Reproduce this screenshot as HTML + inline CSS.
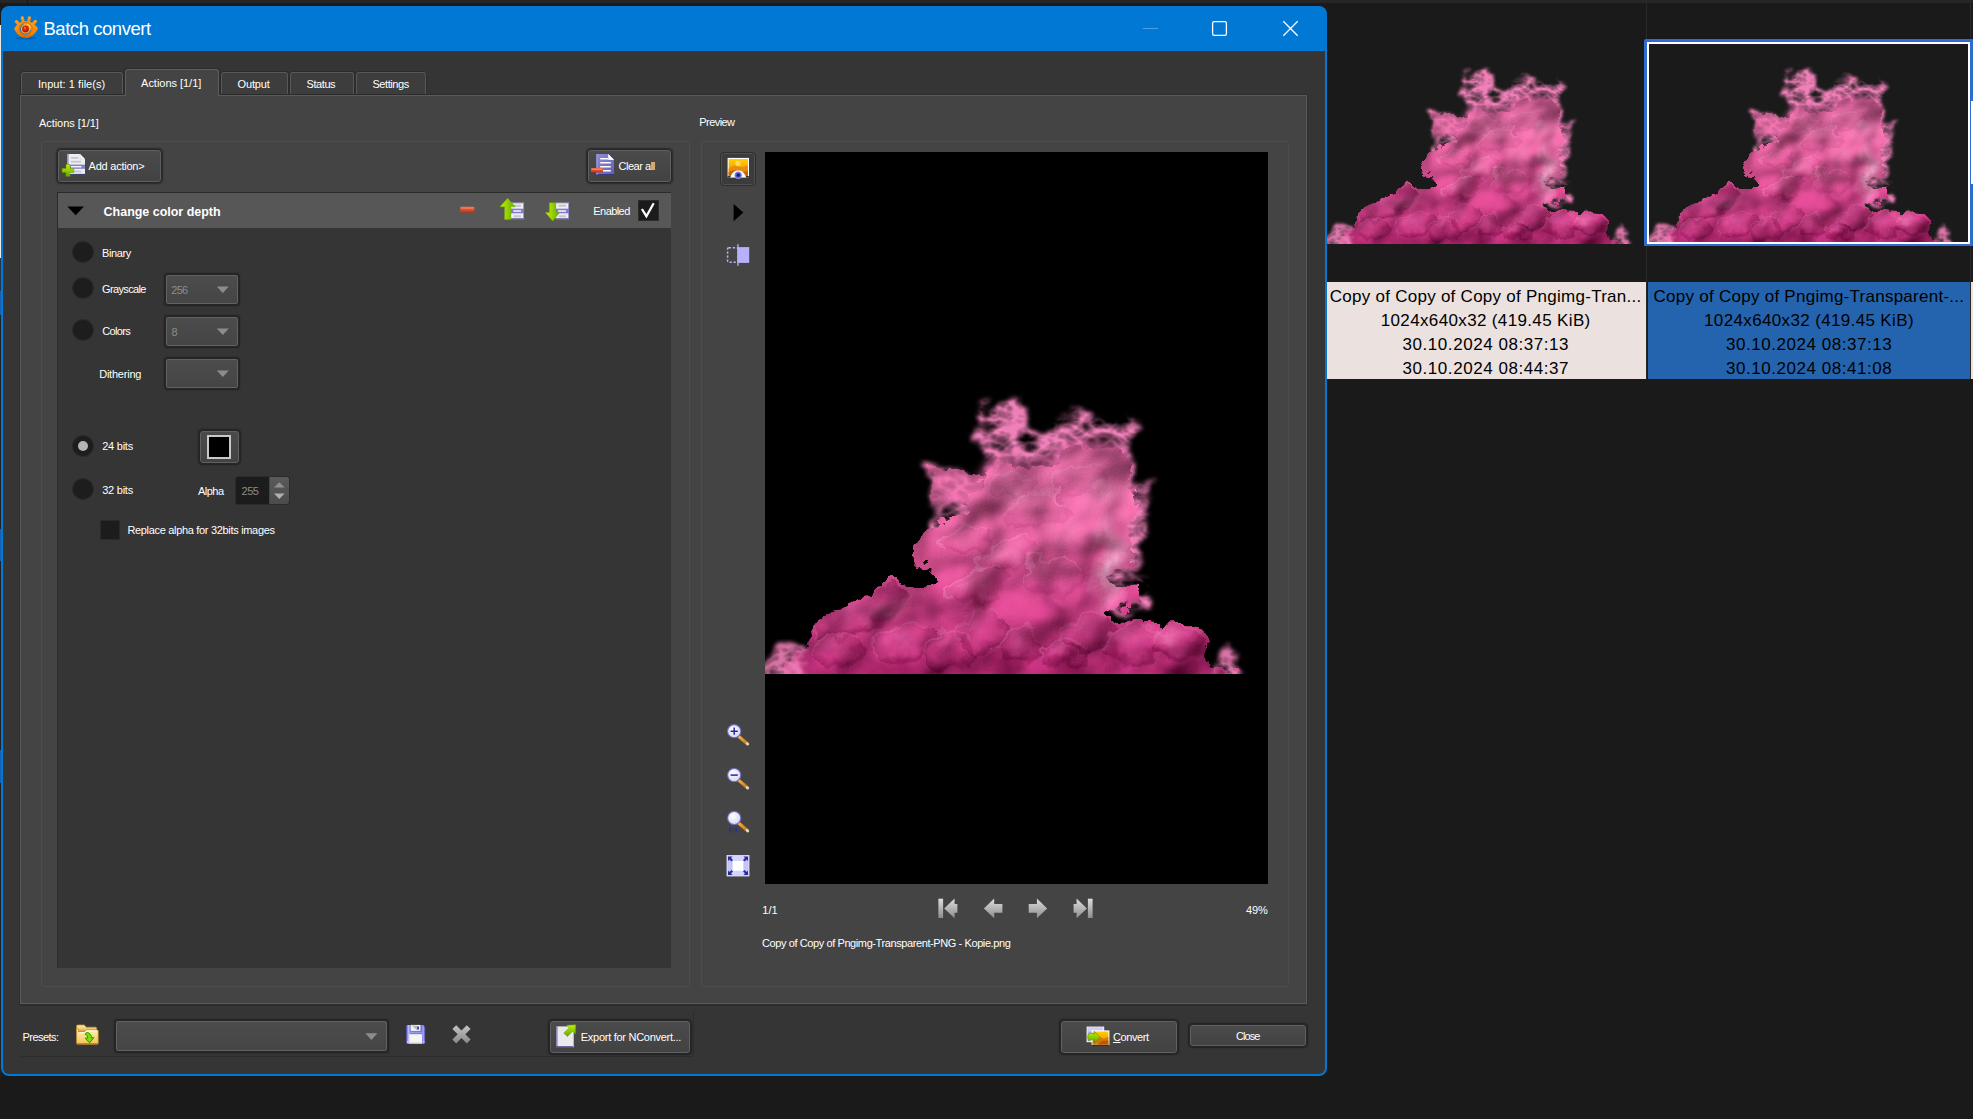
<!DOCTYPE html><html><head><meta charset="utf-8"><title>Batch convert</title><style>
*{box-sizing:border-box;margin:0;padding:0}
html,body{width:1973px;height:1119px;overflow:hidden;background:#1a1a1a;font-family:"Liberation Sans",sans-serif;}
.a,.t,.i{position:absolute}
.t{white-space:pre;font-size:11px;color:#fff}
.i{overflow:visible}
.btn{position:absolute;border:1px solid #262626;border-radius:4px;background:linear-gradient(#4b4b4b,#424242);box-shadow:inset 0 0 0 1px #606060,0 0 1.5px .5px rgba(0,0,0,.4)}
.combo{position:absolute;border:1px solid #262626;border-radius:3px;background:linear-gradient(#4c4c4c,#454545);box-shadow:inset 0 0 0 1px #626262,0 0 1.5px .5px rgba(0,0,0,.4)}
.radio{position:absolute;width:20px;height:20px;border-radius:50%;background:#1d1d1d;box-shadow:0 0 0 1px #2a2a2a}
.grp{position:absolute;border:1px solid #4d4d4d;border-radius:3px}
.tab{position:absolute;background:#3d3d3d;border:1px solid #585858;border-bottom:none;border-radius:3px 3px 0 0;box-shadow:0 0 0 1px #2c2c2c}
</style></head><body>

<svg width="0" height="0" style="position:absolute">
<defs>
<linearGradient id="gGreen" x1="0" y1="0" x2="0" y2="1"><stop offset="0" stop-color="#c4f000"/><stop offset="1" stop-color="#5fa800"/></linearGradient>
<linearGradient id="gGreenH" x1="0" y1="0" x2="1" y2="0"><stop offset="0" stop-color="#c8f400"/><stop offset="1" stop-color="#62aa00"/></linearGradient>
<linearGradient id="gRed" x1="0" y1="0" x2="0" y2="1"><stop offset="0" stop-color="#f4704c"/><stop offset="1" stop-color="#b83414"/></linearGradient>
<linearGradient id="gGrey" x1="0" y1="0" x2="0" y2="1"><stop offset="0" stop-color="#dedede"/><stop offset="1" stop-color="#8c8c8c"/></linearGradient>
<linearGradient id="gPurp" x1="0" y1="0" x2="1" y2="1"><stop offset="0" stop-color="#8f8cd6"/><stop offset="1" stop-color="#6460b2"/></linearGradient>
<linearGradient id="gSun" x1="0" y1="0" x2="0" y2="1"><stop offset="0" stop-color="#ffd000"/><stop offset="0.5" stop-color="#f8a800"/><stop offset="1" stop-color="#d86c00"/></linearGradient>
<linearGradient id="gFold" x1="0" y1="0" x2="0" y2="1"><stop offset="0" stop-color="#fff4b8"/><stop offset="1" stop-color="#f2c058"/></linearGradient>
<linearGradient id="gFoldB" x1="0" y1="0" x2="0" y2="1"><stop offset="0" stop-color="#fff0b0"/><stop offset="1" stop-color="#e8b048"/></linearGradient>
<linearGradient id="gFlop" x1="0" y1="0" x2="1" y2="0"><stop offset="0" stop-color="#5454c4"/><stop offset="0.12" stop-color="#b8b8f8"/><stop offset="0.25" stop-color="#7878e0"/><stop offset="0.8" stop-color="#7474dc"/><stop offset="0.9" stop-color="#a8a8f0"/><stop offset="1" stop-color="#4444b0"/></linearGradient>
<radialGradient id="gLens" cx="0.4" cy="0.35" r="0.7"><stop offset="0" stop-color="#ffffff"/><stop offset="1" stop-color="#d4d4f0"/></radialGradient>
<linearGradient id="gHandle" x1="0" y1="0" x2="1" y2="1"><stop offset="0" stop-color="#f0b050"/><stop offset="1" stop-color="#c07818"/></linearGradient>
<radialGradient id="gPupil" cx="0.45" cy="0.4" r="0.6"><stop offset="0" stop-color="#f04020"/><stop offset="1" stop-color="#b00c00"/></radialGradient>
<linearGradient id="gOr" x1="0" y1="0" x2="0" y2="1"><stop offset="0" stop-color="#ffa018"/><stop offset="1" stop-color="#f07800"/></linearGradient>
<radialGradient id="gIris" cx="0.5" cy="0.5" r="0.5"><stop offset="0" stop-color="#202080"/><stop offset="0.35" stop-color="#3838b0"/><stop offset="1" stop-color="#9898f0"/></radialGradient>
</defs></svg>

<svg width="0" height="0" style="position:absolute"><defs>

<linearGradient id="sBase" x1="0" y1="0" x2="0" y2="1">
 <stop offset="0.2" stop-color="#f070ac"/><stop offset="0.42" stop-color="#e65a9c"/><stop offset="0.62" stop-color="#da4890"/><stop offset="0.78" stop-color="#d23c88"/><stop offset="0.9" stop-color="#c6307e"/><stop offset="1" stop-color="#b42470"/>
</linearGradient>
<radialGradient id="sPuff" cx="0.4" cy="0.3" r="0.66">
 <stop offset="0" stop-color="#f888bc" stop-opacity=".7"/><stop offset="0.6" stop-color="#e860a0" stop-opacity=".35"/><stop offset="0.86" stop-color="#a01c60" stop-opacity=".4"/><stop offset="1" stop-color="#801048" stop-opacity="0"/>
</radialGradient>
<radialGradient id="sPuffD" cx="0.38" cy="0.28" r="0.7">
 <stop offset="0" stop-color="#e058a0" stop-opacity=".85"/><stop offset="0.55" stop-color="#c83880" stop-opacity=".55"/><stop offset="0.85" stop-color="#800c48" stop-opacity=".6"/><stop offset="1" stop-color="#600034" stop-opacity="0"/>
</radialGradient>
<radialGradient id="sHi" cx="0.5" cy="0.5" r="0.5">
 <stop offset="0" stop-color="#ffc4e0" stop-opacity=".9"/><stop offset="1" stop-color="#ff8cc0" stop-opacity="0"/>
</radialGradient>
<radialGradient id="sDk" cx="0.5" cy="0.5" r="0.5">
 <stop offset="0" stop-color="#6a0034" stop-opacity=".8"/><stop offset="1" stop-color="#6a0034" stop-opacity="0"/>
</radialGradient>
<filter id="sEdge" x="-10%" y="-10%" width="120%" height="120%" color-interpolation-filters="sRGB">
 <feTurbulence type="fractalNoise" baseFrequency="0.045" numOctaves="4" seed="11" result="n"/>
 <feDisplacementMap in="SourceGraphic" in2="n" scale="26" xChannelSelector="R" yChannelSelector="G" result="d0"/>
 <feOffset in="d0" dx="2.5" dy="2.5" result="d"/>
 <feTurbulence type="fractalNoise" baseFrequency="0.016 0.02" numOctaves="4" seed="31" result="n2a"/>
 <feGaussianBlur in="n2a" stdDeviation="5" result="n2"/>
 <feDiffuseLighting in="n2" surfaceScale="17" diffuseConstant="1.0" lighting-color="#ffffff" result="l"><feDistantLight azimuth="225" elevation="50"/></feDiffuseLighting>
 <feComposite in="d" in2="l" operator="arithmetic" k1="0.66" k2="0.40" k3="0.12" k4="-0.09" result="m"/>
 <feComposite in="m" in2="d" operator="in" result="mm"/>
 <feGaussianBlur in="mm" stdDeviation="0.5"/>
</filter>
<filter id="sFil" x="-10%" y="-10%" width="120%" height="120%" color-interpolation-filters="sRGB">
 <feTurbulence type="turbulence" baseFrequency="0.03 0.042" numOctaves="3" seed="8" result="t"/>
 <feColorMatrix in="t" type="matrix" values="0 0 0 0 0.94  0 0 0 0 0.50  0 0 0 0 0.72  -1.9 0 0 0 1.2" result="a"/>
 <feTurbulence type="fractalNoise" baseFrequency="0.045" numOctaves="4" seed="11" result="n"/>
 <feDisplacementMap in="SourceGraphic" in2="n" scale="26" xChannelSelector="R" yChannelSelector="G" result="d0"/>
 <feOffset in="d0" dx="2.5" dy="2.5" result="d"/>
 <feGaussianBlur in="d" stdDeviation="2.2" result="db"/>
 <feComposite in="a" in2="db" operator="in" result="w"/>
 <feGaussianBlur in="w" stdDeviation="0.4"/>
</filter>
<filter id="sSoft" x="-10%" y="-10%" width="120%" height="120%"><feOffset dx="1" dy="-3"/><feGaussianBlur stdDeviation="5"/></filter>
<filter id="sWisp" x="-20%" y="-20%" width="140%" height="140%" color-interpolation-filters="sRGB">
 <feTurbulence type="fractalNoise" baseFrequency="0.06" numOctaves="3" seed="3" result="n"/>
 <feDisplacementMap in="SourceGraphic" in2="n" scale="18" xChannelSelector="G" yChannelSelector="R" result="d"/>
 <feGaussianBlur in="d" stdDeviation="0.45"/>
</filter>
<filter id="sTex" x="0" y="0" width="100%" height="100%" color-interpolation-filters="sRGB">
 <feTurbulence type="fractalNoise" baseFrequency="0.028 0.034" numOctaves="4" seed="23" result="n"/>
 <feDiffuseLighting in="n" surfaceScale="7" diffuseConstant="1.15" lighting-color="#ffffff" result="l"><feDistantLight azimuth="235" elevation="52"/></feDiffuseLighting>
 <feComposite in="l" in2="SourceAlpha" operator="in"/>
</filter>
<clipPath id="sSil"><path d="M45.0 318.0 C-22.7 310.3 43.2 281.7 44.0 272.0 C44.8 262.3 46.7 263.5 50.0 260.0 C53.3 256.5 58.3 254.7 64.0 251.0 C69.7 247.3 76.0 242.7 84.0 238.0 C92.0 233.3 103.5 225.8 112.0 223.0 C120.5 220.2 127.8 220.5 135.0 221.0 C142.2 221.5 150.0 226.8 155.0 226.0 C160.0 225.2 164.5 219.3 165.0 216.0 C165.5 212.7 160.7 210.2 158.0 206.0 C155.3 201.8 150.8 195.3 149.0 191.0 C147.2 186.7 145.5 184.2 147.0 180.0 C148.5 175.8 152.8 170.2 158.0 166.0 C163.2 161.8 171.3 157.5 178.0 155.0 C184.7 152.5 195.0 153.5 198.0 151.0 C201.0 148.5 194.8 143.8 196.0 140.0 C197.2 136.2 201.8 132.2 205.0 128.0 C208.2 123.8 212.2 118.8 215.0 115.0 C217.8 111.2 217.8 107.5 222.0 105.0 C226.2 102.5 233.3 100.2 240.0 100.0 C246.7 99.8 254.5 104.3 262.0 104.0 C269.5 103.7 278.7 101.0 285.0 98.0 C291.3 95.0 294.2 88.7 300.0 86.0 C305.8 83.3 312.5 82.0 320.0 82.0 C327.5 82.0 338.3 83.8 345.0 86.0 C351.7 88.2 356.8 91.0 360.0 95.0 C363.2 99.0 363.7 106.2 364.0 110.0 C364.3 113.8 360.7 114.7 362.0 118.0 C363.3 121.3 371.0 124.8 372.0 130.0 C373.0 135.2 369.2 142.7 368.0 149.0 C366.8 155.3 366.5 161.2 365.0 168.0 C363.5 174.8 358.8 184.7 359.0 190.0 C359.2 195.3 367.0 196.8 366.0 200.0 C365.0 203.2 356.8 205.2 353.0 209.0 C349.2 212.8 339.8 219.8 343.0 223.0 C346.2 226.2 367.5 224.5 372.0 228.0 C376.5 231.5 373.8 241.2 370.0 244.0 C366.2 246.8 354.3 243.7 349.0 245.0 C343.7 246.3 333.0 249.3 338.0 252.0 C343.0 254.7 364.0 259.3 379.0 261.0 C394.0 262.7 418.2 259.3 428.0 262.0 C437.8 264.7 436.8 271.2 438.0 277.0 C439.2 282.8 433.0 290.2 435.0 297.0 C437.0 303.8 515.0 314.5 450.0 318.0 C385.0 321.5 112.7 325.7 45.0 318.0 Z"/></clipPath>
<clipPath id="sClip"><rect x="0" y="0" width="503" height="314"/></clipPath>

<symbol id="smoke" viewBox="0 0 503 314" preserveAspectRatio="none"><g clip-path="url(#sClip)">
<g filter="url(#sFil)"><path d="M150.0 170.0 C141.2 171.7 145.7 180.7 147.0 180.0 C148.3 179.3 154.2 171.0 158.0 166.0 C161.8 161.0 169.7 154.3 170.0 150.0 C170.3 145.7 160.7 142.0 160.0 140.0 C159.3 138.0 165.5 141.3 166.0 138.0 C166.5 134.7 164.3 126.2 163.0 120.0 C161.7 113.8 153.8 102.7 158.0 101.0 C162.2 99.3 178.8 108.0 188.0 110.0 C197.2 112.0 208.7 115.8 213.0 113.0 C217.3 110.2 214.5 100.8 214.0 93.0 C213.5 85.2 210.3 74.8 210.0 66.0 C209.7 57.2 210.0 42.3 212.0 40.0 C214.0 37.7 218.7 52.3 222.0 52.0 C225.3 51.7 228.3 41.2 232.0 38.0 C235.7 34.8 239.8 31.8 244.0 33.0 C248.2 34.2 254.0 39.5 257.0 45.0 C260.0 50.5 258.3 62.5 262.0 66.0 C265.7 69.5 272.3 69.2 279.0 66.0 C285.7 62.8 295.7 50.7 302.0 47.0 C308.3 43.3 311.0 43.2 317.0 44.0 C323.0 44.8 329.5 49.7 338.0 52.0 C346.5 54.3 363.7 53.3 368.0 58.0 C372.3 62.7 364.0 72.3 364.0 80.0 C364.0 87.7 367.7 97.7 368.0 104.0 C368.3 110.3 364.0 114.5 366.0 118.0 C368.0 121.5 378.3 119.8 380.0 125.0 C381.7 130.2 376.0 142.3 376.0 149.0 C376.0 155.7 381.3 158.2 380.0 165.0 C378.7 171.8 369.0 184.2 368.0 190.0 C367.0 195.8 375.3 196.3 374.0 200.0 C372.7 203.7 358.3 208.3 360.0 212.0 C361.7 215.7 380.7 216.3 384.0 222.0 C387.3 227.7 385.7 241.7 380.0 246.0 C374.3 250.3 363.3 255.7 350.0 248.0 C336.7 240.3 316.7 214.7 300.0 200.0 C283.3 185.3 266.7 165.0 250.0 160.0 C233.3 155.0 216.7 168.3 200.0 170.0 C183.3 171.7 158.8 168.3 150.0 170.0 Z" fill="#fff"/></g>
<g filter="url(#sSoft)" opacity=".6"><path d="M200.0 170.0 C191.3 164.3 198.7 156.0 198.0 151.0 C197.3 146.0 194.8 143.8 196.0 140.0 C197.2 136.2 201.8 132.2 205.0 128.0 C208.2 123.8 212.2 118.8 215.0 115.0 C217.8 111.2 217.8 107.5 222.0 105.0 C226.2 102.5 233.3 100.2 240.0 100.0 C246.7 99.8 254.5 104.3 262.0 104.0 C269.5 103.7 278.7 101.0 285.0 98.0 C291.3 95.0 294.2 88.7 300.0 86.0 C305.8 83.3 312.5 82.0 320.0 82.0 C327.5 82.0 338.3 83.8 345.0 86.0 C351.7 88.2 356.8 91.0 360.0 95.0 C363.2 99.0 363.7 106.2 364.0 110.0 C364.3 113.8 361.7 113.8 362.0 118.0 C362.3 122.2 366.3 126.3 366.0 135.0 C365.7 143.7 371.0 161.7 360.0 170.0 C349.0 178.3 318.3 182.5 300.0 185.0 C281.7 187.5 266.7 187.5 250.0 185.0 C233.3 182.5 208.7 175.7 200.0 170.0 Z" fill="#e465a4"/></g>
<g filter="url(#sEdge)" opacity=".62"><path d="M162.0 104.0 C165.8 102.0 179.3 108.7 188.0 110.0 C196.7 111.3 208.3 109.5 214.0 112.0 C219.7 114.5 222.7 120.3 222.0 125.0 C221.3 129.7 215.0 136.5 210.0 140.0 C205.0 143.5 199.0 146.0 192.0 146.0 C185.0 146.0 172.5 144.0 168.0 140.0 C163.5 136.0 166.0 128.0 165.0 122.0 C164.0 116.0 158.2 106.0 162.0 104.0 Z" fill="#ee6aa8"/></g>
<g filter="url(#sEdge)"><g clip-path="url(#sSil)"><path d="M45.0 318.0 C-22.7 310.3 43.2 281.7 44.0 272.0 C44.8 262.3 46.7 263.5 50.0 260.0 C53.3 256.5 58.3 254.7 64.0 251.0 C69.7 247.3 76.0 242.7 84.0 238.0 C92.0 233.3 103.5 225.8 112.0 223.0 C120.5 220.2 127.8 220.5 135.0 221.0 C142.2 221.5 150.0 226.8 155.0 226.0 C160.0 225.2 164.5 219.3 165.0 216.0 C165.5 212.7 160.7 210.2 158.0 206.0 C155.3 201.8 150.8 195.3 149.0 191.0 C147.2 186.7 145.5 184.2 147.0 180.0 C148.5 175.8 152.8 170.2 158.0 166.0 C163.2 161.8 171.3 157.5 178.0 155.0 C184.7 152.5 195.0 153.5 198.0 151.0 C201.0 148.5 194.8 143.8 196.0 140.0 C197.2 136.2 201.8 132.2 205.0 128.0 C208.2 123.8 212.2 118.8 215.0 115.0 C217.8 111.2 217.8 107.5 222.0 105.0 C226.2 102.5 233.3 100.2 240.0 100.0 C246.7 99.8 254.5 104.3 262.0 104.0 C269.5 103.7 278.7 101.0 285.0 98.0 C291.3 95.0 294.2 88.7 300.0 86.0 C305.8 83.3 312.5 82.0 320.0 82.0 C327.5 82.0 338.3 83.8 345.0 86.0 C351.7 88.2 356.8 91.0 360.0 95.0 C363.2 99.0 363.7 106.2 364.0 110.0 C364.3 113.8 360.7 114.7 362.0 118.0 C363.3 121.3 371.0 124.8 372.0 130.0 C373.0 135.2 369.2 142.7 368.0 149.0 C366.8 155.3 366.5 161.2 365.0 168.0 C363.5 174.8 358.8 184.7 359.0 190.0 C359.2 195.3 367.0 196.8 366.0 200.0 C365.0 203.2 356.8 205.2 353.0 209.0 C349.2 212.8 339.8 219.8 343.0 223.0 C346.2 226.2 367.5 224.5 372.0 228.0 C376.5 231.5 373.8 241.2 370.0 244.0 C366.2 246.8 354.3 243.7 349.0 245.0 C343.7 246.3 333.0 249.3 338.0 252.0 C343.0 254.7 364.0 259.3 379.0 261.0 C394.0 262.7 418.2 259.3 428.0 262.0 C437.8 264.7 436.8 271.2 438.0 277.0 C439.2 282.8 433.0 290.2 435.0 297.0 C437.0 303.8 515.0 314.5 450.0 318.0 C385.0 321.5 112.7 325.7 45.0 318.0 Z" fill="url(#sBase)"/><ellipse cx="93" cy="250" rx="48" ry="24" fill="url(#sPuffD)" opacity="0.9" transform="rotate(-20 93 250)"/><ellipse cx="137" cy="282" rx="34" ry="20" fill="url(#sPuffD)" opacity="0.9" transform="rotate(-10 137 282)"/><ellipse cx="182" cy="288" rx="26" ry="22" fill="url(#sPuffD)" opacity="0.9" transform="rotate(10 182 288)"/><ellipse cx="216" cy="268" rx="28" ry="22" fill="url(#sPuffD)" opacity="0.85" transform="rotate(-15 216 268)"/><ellipse cx="253" cy="284" rx="28" ry="20" fill="url(#sPuffD)" opacity="0.9" transform="rotate(5 253 284)"/><ellipse cx="296" cy="290" rx="24" ry="18" fill="url(#sPuffD)" opacity="0.9" transform="rotate(0 296 290)"/><ellipse cx="322" cy="270" rx="28" ry="18" fill="url(#sPuffD)" opacity="0.8" transform="rotate(-10 322 270)"/><ellipse cx="366" cy="282" rx="32" ry="20" fill="url(#sPuffD)" opacity="0.9" transform="rotate(0 366 282)"/><ellipse cx="408" cy="280" rx="28" ry="20" fill="url(#sPuffD)" opacity="0.9" transform="rotate(10 408 280)"/><ellipse cx="208" cy="226" rx="30" ry="20" fill="url(#sPuff)" opacity="0.7" transform="rotate(-10 208 226)"/><ellipse cx="242" cy="194" rx="30" ry="18" fill="url(#sPuff)" opacity="0.7" transform="rotate(-20 242 194)"/><ellipse cx="285" cy="215" rx="32" ry="22" fill="url(#sPuff)" opacity="0.6" transform="rotate(10 285 215)"/><ellipse cx="200" cy="178" rx="28" ry="16" fill="url(#sPuff)" opacity="0.6" transform="rotate(-10 200 178)"/><ellipse cx="270" cy="150" rx="34" ry="20" fill="url(#sPuff)" opacity="0.5" transform="rotate(0 270 150)"/><ellipse cx="310" cy="118" rx="30" ry="18" fill="url(#sPuff)" opacity="0.5" transform="rotate(-10 310 118)"/><ellipse cx="245" cy="122" rx="26" ry="14" fill="url(#sPuff)" opacity="0.5" transform="rotate(0 245 122)"/><ellipse cx="70" cy="290" rx="26" ry="18" fill="url(#sPuffD)" opacity="0.8" transform="rotate(0 70 290)"/><path d="M46.9 256.0 A48 24 0 0 1 129.0 235.1" fill="none" stroke="#f37db6" stroke-width="3" stroke-linecap="round" opacity=".3" transform="rotate(-20 93 250)"/><path d="M104.4 287.0 A34 20 0 0 1 162.5 269.6" fill="none" stroke="#f37db6" stroke-width="3" stroke-linecap="round" opacity=".3" transform="rotate(-10 137 282)"/><path d="M157.0 293.5 A26 22 0 0 1 201.5 274.4" fill="none" stroke="#f37db6" stroke-width="3" stroke-linecap="round" opacity=".3" transform="rotate(10 182 288)"/><path d="M189.1 273.5 A28 22 0 0 1 237.0 254.4" fill="none" stroke="#f37db6" stroke-width="3" stroke-linecap="round" opacity=".3" transform="rotate(-15 216 268)"/><path d="M226.1 289.0 A28 20 0 0 1 274.0 271.6" fill="none" stroke="#f37db6" stroke-width="3" stroke-linecap="round" opacity=".3" transform="rotate(5 253 284)"/><path d="M273.0 294.5 A24 18 0 0 1 314.0 278.8" fill="none" stroke="#f37db6" stroke-width="3" stroke-linecap="round" opacity=".3" transform="rotate(0 296 290)"/><path d="M295.1 274.5 A28 18 0 0 1 343.0 258.8" fill="none" stroke="#f37db6" stroke-width="3" stroke-linecap="round" opacity=".3" transform="rotate(-10 322 270)"/><path d="M335.3 287.0 A32 20 0 0 1 390.0 269.6" fill="none" stroke="#f37db6" stroke-width="3" stroke-linecap="round" opacity=".3" transform="rotate(0 366 282)"/><path d="M381.1 285.0 A28 20 0 0 1 429.0 267.6" fill="none" stroke="#f37db6" stroke-width="3" stroke-linecap="round" opacity=".3" transform="rotate(10 408 280)"/><path d="M179.2 231.0 A30 20 0 0 1 230.5 213.6" fill="none" stroke="#fba6cf" stroke-width="3" stroke-linecap="round" opacity=".3" transform="rotate(-10 208 226)"/><path d="M213.2 198.5 A30 18 0 0 1 264.5 182.8" fill="none" stroke="#fba6cf" stroke-width="3" stroke-linecap="round" opacity=".3" transform="rotate(-20 242 194)"/><path d="M254.3 220.5 A32 22 0 0 1 309.0 201.4" fill="none" stroke="#fba6cf" stroke-width="3" stroke-linecap="round" opacity=".3" transform="rotate(10 285 215)"/><path d="M173.1 182.0 A28 16 0 0 1 221.0 168.1" fill="none" stroke="#fba6cf" stroke-width="3" stroke-linecap="round" opacity=".3" transform="rotate(-10 200 178)"/><path d="M237.4 155.0 A34 20 0 0 1 295.5 137.6" fill="none" stroke="#fba6cf" stroke-width="3" stroke-linecap="round" opacity=".3" transform="rotate(0 270 150)"/><path d="M281.2 122.5 A30 18 0 0 1 332.5 106.8" fill="none" stroke="#fba6cf" stroke-width="3" stroke-linecap="round" opacity=".3" transform="rotate(-10 310 118)"/><path d="M220.0 125.5 A26 14 0 0 1 264.5 113.3" fill="none" stroke="#fba6cf" stroke-width="3" stroke-linecap="round" opacity=".3" transform="rotate(0 245 122)"/><path d="M45.0 294.5 A26 18 0 0 1 89.5 278.8" fill="none" stroke="#f37db6" stroke-width="3" stroke-linecap="round" opacity=".3" transform="rotate(0 70 290)"/><ellipse cx="344" cy="205" rx="22" ry="62" fill="url(#sHi)" opacity="1.0" transform="rotate(8 344 205)"/><ellipse cx="338" cy="170" rx="16" ry="30" fill="url(#sHi)" opacity="0.5" transform="rotate(0 338 170)"/><ellipse cx="335" cy="128" rx="32" ry="26" fill="url(#sHi)" opacity="0.35" transform="rotate(0 335 128)"/><ellipse cx="250" cy="128" rx="30" ry="22" fill="url(#sHi)" opacity="0.3" transform="rotate(0 250 128)"/><ellipse cx="300" cy="170" rx="40" ry="30" fill="url(#sHi)" opacity="0.25" transform="rotate(0 300 170)"/><ellipse cx="250" cy="190" rx="40" ry="25" fill="url(#sHi)" opacity="0.2" transform="rotate(0 250 190)"/><ellipse cx="120" cy="245" rx="40" ry="16" fill="url(#sHi)" opacity="0.3" transform="rotate(-20 120 245)"/><ellipse cx="395" cy="272" rx="30" ry="10" fill="url(#sHi)" opacity="0.25" transform="rotate(0 395 272)"/><ellipse cx="240" cy="303" rx="26" ry="18" fill="url(#sDk)" opacity="0.56" transform="rotate(0 240 303)"/><ellipse cx="300" cy="303" rx="22" ry="16" fill="url(#sDk)" opacity="0.56" transform="rotate(0 300 303)"/><ellipse cx="346" cy="296" rx="14" ry="22" fill="url(#sDk)" opacity="0.56" transform="rotate(0 346 296)"/><ellipse cx="120" cy="306" rx="60" ry="14" fill="url(#sDk)" opacity="0.42" transform="rotate(0 120 306)"/><ellipse cx="400" cy="306" rx="40" ry="12" fill="url(#sDk)" opacity="0.42" transform="rotate(0 400 306)"/><ellipse cx="180" cy="290" rx="16" ry="22" fill="url(#sDk)" opacity="0.35" transform="rotate(20 180 290)"/><ellipse cx="215" cy="240" rx="14" ry="10" fill="url(#sDk)" opacity="0.32" transform="rotate(0 215 240)"/><ellipse cx="290" cy="245" rx="20" ry="10" fill="url(#sDk)" opacity="0.24" transform="rotate(0 290 245)"/><ellipse cx="70" cy="285" rx="20" ry="16" fill="url(#sDk)" opacity="0.28" transform="rotate(0 70 285)"/><ellipse cx="270" cy="275" rx="40" ry="10" fill="url(#sDk)" opacity="0.24" transform="rotate(0 270 275)"/></g></g>
<g filter="url(#sFil)" opacity=".9"><path d="M0.0 318.0 C-6.3 315.0 0.3 305.0 2.0 300.0 C3.7 295.0 6.7 290.8 10.0 288.0 C13.3 285.2 18.0 283.2 22.0 283.0 C26.0 282.8 32.2 284.5 34.0 287.0 C35.8 289.5 32.2 294.5 33.0 298.0 C33.8 301.5 37.8 304.7 39.0 308.0 C40.2 311.3 46.5 316.3 40.0 318.0 C33.5 319.7 6.3 321.0 0.0 318.0 Z" fill="#fff"/><path d="M440.0 318.0 C434.8 315.7 444.5 308.3 447.0 304.0 C449.5 299.7 452.2 295.0 455.0 292.0 C457.8 289.0 461.5 286.0 464.0 286.0 C466.5 286.0 469.8 289.3 470.0 292.0 C470.2 294.7 464.3 299.0 465.0 302.0 C465.7 305.0 471.8 307.3 474.0 310.0 C476.2 312.7 483.7 316.7 478.0 318.0 C472.3 319.3 445.2 320.3 440.0 318.0 Z" fill="#fff"/></g>
</g></symbol>
</defs></svg>
<div class="a" style="left:0;top:0;width:1973px;height:3px;background:#262626"></div>
<div class="a" style="left:0;top:3px;width:1973px;height:3px;background:#1c1a19"></div>
<div class="a" style="left:1646px;top:3px;width:1px;height:376px;background:#2a2a2a"></div>
<div class="a" style="left:1970px;top:3px;width:1px;height:376px;background:#2a2a2a"></div>
<div class="a" style="left:27px;top:0;width:1px;height:6px;background:#151515"></div>
<div class="a" style="left:0;top:25px;width:1px;height:233px;background:#eeeae2"></div>
<div class="a" style="left:0;top:258px;width:1px;height:820px;background:linear-gradient(#20364e 0,#20364e 4%,#1560b0 4%,#1560b0 7%,#222 7%,#222 33%,#1560b0 33%,#1560b0 37%,#222 37%,#222 60%,#1560b0 60%,#1560b0 64%,#222 64%)"></div>
<svg class="i" style="left:1327px;top:44px" width="320" height="200"><use href="#smoke" x="0" y="0" width="320" height="200"/></svg>
<div class="a" style="left:1644px;top:39px;width:327px;height:207px;background:#2f6ccf;border-radius:2px 0 0 0"></div>
<div class="a" style="left:1647px;top:42px;width:323px;height:202px;background:#ffffff"></div>
<div class="a" style="left:1649px;top:44px;width:319px;height:198px;background:#1a1a1a;overflow:hidden"><svg class="i" style="left:0px;top:0px" width="320" height="200"><use href="#smoke" x="0" y="0" width="320" height="200"/></svg></div>
<div class="a" style="left:1971px;top:39px;width:2px;height:207px;background:linear-gradient(#2e6bd0 0,#2e6bd0 30%,#ffffff 30%,#ffffff 70%,#2e6bd0 70%)"></div>
<div class="a" style="left:1971px;top:282px;width:2px;height:97px;background:#ebe1df"></div>
<div class="a" style="left:1327px;top:282px;width:319px;height:97px;background:#ebe1df"></div>
<div class="a" style="left:1648px;top:282px;width:322px;height:97px;background:#2464ae"></div>
<div class="t" style="left:1329.75px;top:284.80px;height:24px;line-height:24px;font-size:17px;letter-spacing:0.264px;color:#000;">Copy of Copy of Copy of Pngimg-Tran...</div>
<div class="t" style="left:1380.75px;top:308.90px;height:24px;line-height:24px;font-size:17px;letter-spacing:0.356px;color:#000;">1024x640x32 (419.45 KiB)</div>
<div class="t" style="left:1402.60px;top:332.90px;height:24px;line-height:24px;font-size:17px;letter-spacing:0.546px;color:#000;">30.10.2024 08:37:13</div>
<div class="t" style="left:1402.60px;top:356.80px;height:24px;line-height:24px;font-size:17px;letter-spacing:0.546px;color:#000;">30.10.2024 08:44:37</div>
<div class="t" style="left:1653.55px;top:284.80px;height:24px;line-height:24px;font-size:17px;letter-spacing:0.263px;color:#000;">Copy of Copy of Pngimg-Transparent-...</div>
<div class="t" style="left:1704.05px;top:308.90px;height:24px;line-height:24px;font-size:17px;letter-spacing:0.356px;color:#000;">1024x640x32 (419.45 KiB)</div>
<div class="t" style="left:1725.90px;top:332.90px;height:24px;line-height:24px;font-size:17px;letter-spacing:0.546px;color:#000;">30.10.2024 08:37:13</div>
<div class="t" style="left:1725.90px;top:356.80px;height:24px;line-height:24px;font-size:17px;letter-spacing:0.546px;color:#000;">30.10.2024 08:41:08</div>
<div class="a" style="left:1px;top:6px;width:1326px;height:1070px;background:#0078d4;border-radius:8px"></div>
<div class="a" style="left:3px;top:51px;width:1322px;height:1023px;background:#353535;border-radius:0 0 6px 6px"></div>
<svg class="i" style="left:12px;top:14px" width="28" height="27" viewBox="12 14 28 27" >
<ellipse cx="26" cy="38.2" rx="11" ry="1.4" fill="#003a80" opacity="0.35"/>
<g stroke="url(#gOr)" stroke-width="3.1" stroke-linecap="round" fill="none">
<path d="M16.4 21.6 L20 25.5"/><path d="M22.3 17.8 L23.4 23"/><path d="M29.4 17.8 L28.4 23"/><path d="M35.4 21.4 L32 25.2"/>
</g>
<path d="M14 28.8 C17 23.5 21 21.2 25.8 21.2 C30.5 21.2 34.8 23.6 38 28.4 C35 34.6 30.6 37.8 25.9 37.8 C21 37.8 16.8 34.6 14 28.8 Z" fill="url(#gOr)"/>
<path d="M16.5 31.5 C19 35.6 22.3 37.6 25.9 37.6 C29.5 37.6 32.8 35.6 35.3 31.8 C32.5 34.8 29.6 36 25.9 36 C22.2 36 19 34.6 16.5 31.5Z" fill="#d86000" opacity=".6"/>
<circle cx="25.6" cy="28.9" r="6.6" fill="#f89010" stroke="#d86000" stroke-width="0.7"/>
<circle cx="25.6" cy="28.9" r="4.6" fill="#ffb828"/>
<path d="M23.2 24.2 A5.3 5.3 0 1 0 30.6 30.6" fill="none" stroke="#0a74d0" stroke-width="1.0" stroke-linecap="round"/>
<path d="M27.5 24.2 A5 5 0 0 1 30.4 27.6" fill="none" stroke="#ffd860" stroke-width="1.1" stroke-linecap="round"/>
<circle cx="25.5" cy="29" r="3.4" fill="url(#gPupil)"/>
<circle cx="24.7" cy="28" r="0.9" fill="#ff8060" opacity=".7"/>
</svg>
<div class="t" style="left:43.40px;top:16.00px;height:26px;line-height:26px;font-size:18.5px;letter-spacing:-0.443px;color:#fff;">Batch convert</div>
<svg class="i" style="left:1140px;top:18px" width="170" height="22" viewBox="1140 18 170 22" >
<path d="M1143 28.5 H1158" stroke="#4f9fe0" stroke-width="1"/>
<rect x="1212.6" y="21.6" width="13.8" height="13.8" rx="1.6" fill="none" stroke="#fff" stroke-width="1.3"/>
<path d="M1283.3 21.3 L1297.7 35.7 M1297.7 21.3 L1283.3 35.7" stroke="#fff" stroke-width="1.3"/>
</svg>
<div class="a" style="left:20px;top:95px;width:1287px;height:909px;background:#444444;border:1px solid #5a5a5a;box-shadow:0 0 0 1px #2e2e2e"></div>
<div class="tab" style="left:21px;top:72px;width:102px;height:22px;"></div>
<div class="tab" style="left:221px;top:72px;width:67px;height:22px;"></div>
<div class="tab" style="left:290px;top:72px;width:64px;height:22px;"></div>
<div class="tab" style="left:356px;top:72px;width:70px;height:22px;"></div>
<div class="tab" style="left:125px;top:69px;width:94px;height:27px;background:#444444;border-color:#5e5e5e;box-shadow:-1px -1px 0 0 #2c2c2c,1px -1px 0 0 #2c2c2c;"></div>
<div class="a" style="left:126px;top:95px;width:92px;height:2px;background:#444444"></div>
<div class="t" style="left:37.90px;top:73.60px;height:20px;line-height:20px;font-size:11px;letter-spacing:0.044px;color:#fff;">Input: 1 file(s)</div>
<div class="t" style="left:141.10px;top:72.60px;height:20px;line-height:20px;font-size:11px;letter-spacing:-0.028px;color:#fff;">Actions [1/1]</div>
<div class="t" style="left:237.50px;top:73.60px;height:20px;line-height:20px;font-size:11px;letter-spacing:-0.144px;color:#fff;">Output</div>
<div class="t" style="left:306.60px;top:73.60px;height:20px;line-height:20px;font-size:11px;letter-spacing:-0.437px;color:#fff;">Status</div>
<div class="t" style="left:372.40px;top:73.60px;height:20px;line-height:20px;font-size:11px;letter-spacing:-0.421px;color:#fff;">Settings</div>
<div class="t" style="left:39.00px;top:112.80px;height:20px;line-height:20px;font-size:11px;letter-spacing:-0.061px;color:#fff;">Actions [1/1]</div>
<div class="t" style="left:699.30px;top:112.00px;height:20px;line-height:20px;font-size:11px;letter-spacing:-0.571px;color:#fff;">Preview</div>
<div class="grp" style="left:41px;top:141px;width:649px;height:846px"></div>
<div class="grp" style="left:701px;top:141px;width:588px;height:846px"></div>
<div class="btn" style="left:57px;top:149px;width:105px;height:34px"></div>
<svg class="i" style="left:60px;top:152px" width="28" height="26" viewBox="60 152 28 26" >
<path d="M67.2 153.9 H79.8 L85 159.2 V174.6 H67.2 Z" fill="#eeeef2"/>
<rect x="67.2" y="153.9" width="1.4" height="20.7" fill="#8c88cc"/>
<rect x="67.2" y="173.9" width="17.8" height="0.9" fill="#2c2a68"/>
<path d="M79.8 153.9 L85 159.2 H79.8 Z" fill="#c9c9d2"/>
<path d="M79.8 153.9 L85 159.2 L80.6 158.4 Z" fill="#f8f8fc"/>
<rect x="70.8" y="157" width="7.6" height="1.8" fill="#c8c8cc"/>
<rect x="70.8" y="160.8" width="10.4" height="1.8" fill="#c8c8cc"/>
<rect x="68.6" y="164.6" width="16.4" height="4.2" fill="#8480cc"/>
<rect x="71" y="166.1" width="10.4" height="1.3" fill="#ffffff"/>
<rect x="72" y="170.6" width="9.4" height="1.8" fill="#c8c8cc"/>
<path d="M66 164.6 h4 v3.9 h3.9 v3.9 h-3.9 v3.9 h-4 v-3.9 h-3.9 v-3.9 h3.9 Z" fill="url(#gGreen)" stroke="#6a9c00" stroke-width="0.5" stroke-linejoin="round"/>
</svg>
<div class="t" style="left:88.60px;top:156.00px;height:20px;line-height:20px;font-size:11px;letter-spacing:-0.241px;color:#fff;">Add action></div>
<div class="btn" style="left:587px;top:149px;width:85px;height:34px"></div>
<svg class="i" style="left:590px;top:152px" width="26" height="25" viewBox="590 152 26 25" >
<path d="M596.4 154 H608.2 L614 160 V174.7 H596.4 Z" fill="url(#gPurp)"/>
<rect x="596.4" y="174" width="17.6" height="0.9" fill="#34327c"/>
<rect x="596.4" y="154" width="1.2" height="20.7" fill="#9a98dc"/>
<path d="M608.2 154 L614 160 H608.2 Z" fill="#ecebfa"/>
<path d="M608.2 154 L614 160 L609.2 159 Z" fill="#ffffff"/>
<rect x="600.2" y="158" width="8.2" height="1.5" fill="#fff"/>
<rect x="600.2" y="162" width="10.6" height="1.5" fill="#fff"/>
<rect x="600.2" y="166" width="10.6" height="1.5" fill="#fff"/>
<rect x="600.2" y="170" width="10.6" height="1.5" fill="#fff"/>
<rect x="591" y="168.1" width="12" height="4.4" rx="0.9" fill="url(#gRed)"/>
<rect x="592" y="168.9" width="10" height="0.9" fill="#ff9878" opacity=".7"/>
</svg>
<div class="t" style="left:618.40px;top:156.00px;height:20px;line-height:20px;font-size:11px;letter-spacing:-0.443px;color:#fff;">Clear all</div>
<div class="a" style="left:57px;top:192px;width:614px;height:776px;background:#353535;border-top:1px solid #2b2b2b;border-left:1px solid #2b2b2b"></div>
<div class="a" style="left:58px;top:193px;width:613px;height:35px;background:#575757"></div>
<svg class="i" style="left:66px;top:204px" width="20" height="14" viewBox="66 204 20 14" ><path d="M67.4 206.4 H84 L75.7 215.2 Z" fill="#000"/></svg>
<div class="t" style="left:103.60px;top:202.00px;height:20px;line-height:20px;font-size:12.5px;letter-spacing:-0.021px;color:#fff;font-weight:bold;">Change color depth</div>
<svg class="i" style="left:459px;top:205px" width="17" height="9" viewBox="459 205 17 9" ><rect x="460.1" y="206.7" width="14.4" height="5.8" rx="1.2" fill="url(#gRed)"/><rect x="461.2" y="207.6" width="12.2" height="1" fill="#ff9c7c" opacity=".6"/></svg>
<svg class="i" style="left:499px;top:197px" width="26" height="24" viewBox="499 197 26 24" >
<rect x="510.8" y="202.8" width="13.2" height="16.4" fill="#ededf3"/>
<rect x="510.8" y="218.4" width="13.2" height="0.8" fill="#34327a"/>
<rect x="523.2" y="202.8" width="0.8" height="16.4" fill="#8884c8"/>
<rect x="510.8" y="202.8" width="13.2" height="0.7" fill="#a8a6dc"/>
<rect x="513.8" y="204.752" width="7.199999999999999" height="2" fill="#c6c6c8"/>
<rect x="510.8" y="208.7" width="13.2" height="4.6" fill="#807ccc"/>
<rect x="513.3" y="210.3" width="7.699999999999999" height="1.4" fill="#ffffff"/>
<rect x="513.8" y="215.24800000000002" width="7.199999999999999" height="2" fill="#c6c6c8"/>

<path d="M507.6 198.2 L515.4 206.8 H510.9 V219.6 H504.6 V206.8 H500 Z" fill="url(#gGreenH)" stroke="#78b000" stroke-width="0.4"/>
</svg>
<svg class="i" style="left:544px;top:201px" width="26" height="21" viewBox="544 201 26 21" >
<rect x="555.6" y="202.8" width="13.4" height="16.4" fill="#ededf3"/>
<rect x="555.6" y="218.4" width="13.4" height="0.8" fill="#34327a"/>
<rect x="568.2" y="202.8" width="0.8" height="16.4" fill="#8884c8"/>
<rect x="555.6" y="202.8" width="13.4" height="0.7" fill="#a8a6dc"/>
<rect x="558.6" y="204.752" width="7.4" height="2" fill="#c6c6c8"/>
<rect x="555.6" y="208.7" width="13.4" height="4.6" fill="#807ccc"/>
<rect x="558.1" y="210.3" width="7.9" height="1.4" fill="#ffffff"/>
<rect x="558.6" y="215.24800000000002" width="7.4" height="2" fill="#c6c6c8"/>

<path d="M549.4 202.8 H555.8 V212.6 H559.8 L552.6 221 L545.5 212.6 H549.4 Z" fill="url(#gGreenH)" stroke="#78b000" stroke-width="0.4"/>
</svg>
<div class="t" style="left:593.30px;top:200.60px;height:20px;line-height:20px;font-size:11px;letter-spacing:-0.562px;color:#fff;">Enabled</div>
<div class="a" style="left:637.5px;top:200px;width:21px;height:20.5px;background:#1b1b1b;border:1px solid #2c2c2c"></div>
<svg class="i" style="left:637px;top:199px" width="23" height="23" viewBox="637 199 23 23" ><path d="M641.9 209 L646.4 216.2 L653.7 203.3" fill="none" stroke="#ffffff" stroke-width="2.3"/></svg>
<div class="radio" style="left:72.5px;top:242px"></div>
<div class="radio" style="left:72.5px;top:278.2px"></div>
<div class="radio" style="left:72.5px;top:320px"></div>
<div class="radio" style="left:72.5px;top:435.6px"></div>
<div class="radio" style="left:72.5px;top:478.8px"></div>
<div class="a" style="left:77.5px;top:440.6px;width:10px;height:10px;border-radius:50%;background:#b4b4b4"></div>
<div class="t" style="left:102.00px;top:242.80px;height:20px;line-height:20px;font-size:11px;letter-spacing:-0.396px;color:#fff;">Binary</div>
<div class="t" style="left:102.00px;top:279.00px;height:20px;line-height:20px;font-size:11px;letter-spacing:-0.640px;color:#fff;">Grayscale</div>
<div class="t" style="left:102.20px;top:321.00px;height:20px;line-height:20px;font-size:11px;letter-spacing:-0.637px;color:#fff;">Colors</div>
<div class="t" style="left:99.20px;top:364.00px;height:20px;line-height:20px;font-size:11px;letter-spacing:-0.228px;color:#fff;">Dithering</div>
<div class="t" style="left:102.20px;top:436.20px;height:20px;line-height:20px;font-size:11px;letter-spacing:-0.235px;color:#fff;">24 bits</div>
<div class="t" style="left:102.20px;top:479.80px;height:20px;line-height:20px;font-size:11px;letter-spacing:-0.235px;color:#fff;">32 bits</div>
<div class="t" style="left:198.00px;top:481.00px;height:20px;line-height:20px;font-size:11px;letter-spacing:-0.533px;color:#fff;">Alpha</div>
<div class="t" style="left:127.40px;top:520.00px;height:20px;line-height:20px;font-size:11px;letter-spacing:-0.318px;color:#fff;">Replace alpha for 32bits images</div>
<div class="combo" style="left:165px;top:274px;width:74px;height:31px"></div><svg class="i" style="left:214px;top:283px" width="16" height="12" viewBox="214 283 16 12" ><path d="M216.8 286.4 H228.8 L222.8 293.0 Z" fill="#8c8c8c"/></svg>
<div class="t" style="left:171.20px;top:280.00px;height:20px;line-height:20px;font-size:11px;letter-spacing:-0.677px;color:#8c8c8c;">256</div>
<div class="combo" style="left:165px;top:316px;width:74px;height:31px"></div><svg class="i" style="left:214px;top:325px" width="16" height="12" viewBox="214 325 16 12" ><path d="M216.8 328.4 H228.8 L222.8 335.0 Z" fill="#8c8c8c"/></svg>
<div class="t" style="left:171.40px;top:322.00px;height:20px;line-height:20px;font-size:11px;letter-spacing:-0.518px;color:#8c8c8c;">8</div>
<div class="combo" style="left:165px;top:358px;width:74px;height:31px"></div><svg class="i" style="left:214px;top:367px" width="16" height="12" viewBox="214 367 16 12" ><path d="M216.8 370.4 H228.8 L222.8 377.0 Z" fill="#8c8c8c"/></svg>
<div class="btn" style="left:198.5px;top:430px;width:41px;height:34px"></div>
<div class="a" style="left:207px;top:435.2px;width:24.2px;height:24px;background:#000;border:2px solid #c8c8c8"></div>
<div class="a" style="left:234.5px;top:476.3px;width:55.5px;height:28.4px;border:1px solid #2b2b2b;border-radius:3px;background:#1c1c1c;overflow:hidden"><div class="a" style="left:33.5px;top:0;width:21px;height:27px;background:linear-gradient(#5a5a5a,#4c4c4c);border-left:1px solid #444"></div></div>
<div class="t" style="left:241.60px;top:481.20px;height:20px;line-height:20px;font-size:11px;letter-spacing:-0.577px;color:#8c8c8c;">255</div>
<svg class="i" style="left:271px;top:480px" width="16" height="22" viewBox="271 480 16 22" ><path d="M274 487.6 H284.6 L279.3 482.2 Z" fill="#909090"/><path d="M274 493.6 H284.6 L279.3 499 Z" fill="#b0b0b0"/></svg>
<div class="a" style="left:99.5px;top:519.6px;width:20.2px;height:20px;background:#1c1c1c;border:1px solid #2a2a2a"></div>
<div class="a" style="left:720px;top:152px;width:36px;height:34px;border:1px solid #2e2e2e;border-radius:4px;background:#3b3b3b;box-shadow:inset 0 0 0 1px #505050"></div>
<svg class="i" style="left:726px;top:156px" width="25" height="25" viewBox="726 156 25 25" >
<rect x="727.6" y="157.9" width="21.4" height="19.6" fill="#ffffff"/>
<rect x="728.7" y="159" width="19.2" height="17.4" fill="url(#gSun)"/>
<circle cx="738" cy="163.4" r="2.6" fill="#ffd860"/>
<path d="M728.7 168.5 C732 166 735 165 738.5 166.5 C742 168 745 166.6 747.9 165.2 V176.4 H728.7 Z" fill="#e88c10"/>
<path d="M728.7 172 C733 169.5 737 170 741 171.5 C744 172.6 746 171.5 747.9 170.5 V176.4 H728.7 Z" fill="#c86800"/>
<path d="M727.6 176.2 H749 V177.5 H727.6 Z" fill="#1a1a1a"/>
<path d="M730.2 177.6 C732 172.2 735 170.4 738.2 170.4 C741.4 170.4 744.4 172.2 746.2 177.6 Z" fill="#ffffff"/>
<circle cx="738.2" cy="175.2" r="3.7" fill="url(#gIris)"/>
<circle cx="738.3" cy="175.1" r="1.3" fill="#18185c"/>
</svg>
<svg class="i" style="left:732px;top:203px" width="13" height="20" viewBox="732 203 13 20" ><path d="M733.6 203.9 L743.3 212.6 L733.6 221.3 Z" fill="#000"/></svg>
<svg class="i" style="left:726px;top:243px" width="25" height="24" viewBox="726 243 25 24" >
<rect x="727.6" y="247.8" width="10.2" height="14.4" rx="1.2" fill="none" stroke="#b6aefa" stroke-width="1.5" stroke-dasharray="2.3 1.7"/>
<rect x="737.8" y="247.1" width="11.4" height="15.8" fill="#b8b0fa"/>
<rect x="737.3" y="244.2" width="1.3" height="21.6" fill="#b8b0fa"/>
</svg>
<div class="a" style="left:765px;top:152px;width:503px;height:732px;background:#000"></div>
<svg class="i" style="left:765px;top:360px" width="503" height="314"><use href="#smoke" x="0" y="0" width="503" height="314"/></svg>
<svg class="i" style="left:726px;top:723px" width="25" height="25" viewBox="726 723 25 25" >
<path d="M739.0 736.6 L747.4000000000001 743.8000000000001" stroke="#8a5412" stroke-width="4" stroke-linecap="round"/>
<path d="M739.0 736.6 L747.4000000000001 743.8000000000001" stroke="url(#gHandle)" stroke-width="2.9" stroke-linecap="round"/>
<path d="M747.0 743.4000000000001 L747.8000000000001 744.2" stroke="#d8d8d8" stroke-width="2.6" stroke-linecap="round"/>
<circle cx="734.2" cy="731.2" r="6.6" fill="url(#gLens)" stroke="#6c6cc0" stroke-width="1.1"/>
<path d="M730.6 731.2 H737.8000000000001 M734.2 727.6 V734.8000000000001" stroke="#28289a" stroke-width="1.5"/></svg>
<svg class="i" style="left:726px;top:767px" width="25" height="25" viewBox="726 767 25 25" >
<path d="M739.0 780.5 L747.4000000000001 787.7" stroke="#8a5412" stroke-width="4" stroke-linecap="round"/>
<path d="M739.0 780.5 L747.4000000000001 787.7" stroke="url(#gHandle)" stroke-width="2.9" stroke-linecap="round"/>
<path d="M747.0 787.3000000000001 L747.8000000000001 788.1" stroke="#d8d8d8" stroke-width="2.6" stroke-linecap="round"/>
<circle cx="734.2" cy="775.1" r="6.6" fill="url(#gLens)" stroke="#6c6cc0" stroke-width="1.1"/>
<path d="M730.6 775.1 H737.8000000000001" stroke="#28289a" stroke-width="1.5"/></svg>
<svg class="i" style="left:726px;top:810px" width="25" height="25" viewBox="726 810 25 25" >
<path d="M739.0 823.4 L747.4000000000001 830.6" stroke="#8a5412" stroke-width="4" stroke-linecap="round"/>
<path d="M739.0 823.4 L747.4000000000001 830.6" stroke="url(#gHandle)" stroke-width="2.9" stroke-linecap="round"/>
<path d="M747.0 830.2 L747.8000000000001 831" stroke="#d8d8d8" stroke-width="2.6" stroke-linecap="round"/>
<circle cx="734.2" cy="818" r="6.6" fill="url(#gLens)" stroke="#6c6cc0" stroke-width="1.1"/>
<g fill="#2c2ca0"><rect x="729.2" y="827.4" width="1.5" height="5"/><rect x="732.4000000000001" y="828.4" width="1.3" height="1.3"/><rect x="732.4000000000001" y="831" width="1.3" height="1.3"/><rect x="735.4000000000001" y="827.4" width="1.5" height="5"/></g></svg>
<svg class="i" style="left:726px;top:854px" width="25" height="24" viewBox="726 854 25 24" >
<rect x="727" y="855.6" width="22" height="20.4" fill="#c4c4fc" stroke="#e8e8ff" stroke-width="0.8"/>
<path d="M727 855.6 L732.5 860.6 H743.5 L749 855.6 Z" fill="#d4d4ff"/>
<path d="M727 876.0 L732.5 871.0 H743.5 L749 876.0 Z" fill="#d4d4ff"/>
<rect x="732.6" y="860.8000000000001" width="10.8" height="10" fill="#ffffff"/>
<g fill="#2a2a9c">
<path d="M728 856.6 h4.6 l-1.6 1.4 l2 2 l-1.6 1.6 l-2 -2 l-1.4 1.6 Z"/>
<path d="M748 856.6 h-4.6 l1.6 1.4 l-2 2 l1.6 1.6 l2 -2 l1.4 1.6 Z"/>
<path d="M728 875.0 h4.6 l-1.6 -1.4 l2 -2 l-1.6 -1.6 l-2 2 l-1.4 -1.6 Z"/>
<path d="M748 875.0 h-4.6 l1.6 -1.4 l-2 -2 l1.6 -1.6 l2 2 l1.4 -1.6 Z"/>
</g>
</svg>
<svg class="i" style="left:936px;top:896px" width="160" height="25" viewBox="936 896 160 25" >
<g fill="url(#gGrey)">
<rect x="938.4" y="898.7" width="4.7" height="19.3"/>
<path d="M944.2 908.4 L954.6 898.5 V904 H957.4 V912.7 H954.6 V918.3 Z"/>
<path d="M983.9 908.4 L994.2 898.5 V904 H1002.4 V912.7 H994.2 V918.3 Z"/>
<path d="M1047.2 908.4 L1036.9 898.5 V904 H1028.7 V912.7 H1036.9 V918.3 Z"/>
<path d="M1086.9 908.4 L1076.6 898.5 V904 H1073.6 V912.7 H1076.6 V918.3 Z"/>
<rect x="1087.9" y="898.7" width="4.7" height="19.3"/>
</g>
</svg>
<div class="t" style="left:762.30px;top:899.60px;height:20px;line-height:20px;font-size:11px;letter-spacing:0.004px;color:#fff;">1/1</div>
<div class="t" style="left:1246.00px;top:899.60px;height:20px;line-height:20px;font-size:11px;letter-spacing:-0.108px;color:#fff;">49%</div>
<div class="t" style="left:762.00px;top:933.00px;height:20px;line-height:20px;font-size:11px;letter-spacing:-0.404px;color:#fff;">Copy of Copy of Pngimg-Transparent-PNG - Kopie.png</div>
<div class="a" style="left:20px;top:1005px;width:1287px;height:1px;background:#2d2d2d"></div>
<div class="a" style="left:20px;top:1055.5px;width:673px;height:1px;background:#2d2d2d"></div>
<div class="a" style="left:692.5px;top:1012px;width:1px;height:44px;background:#2d2d2d"></div>
<div class="t" style="left:22.50px;top:1026.80px;height:20px;line-height:20px;font-size:11px;letter-spacing:-0.550px;color:#fff;">Presets:</div>
<svg class="i" style="left:75px;top:1023px" width="25" height="23" viewBox="75 1023 25 23" >
<path d="M76.6 1026.2 Q76.6 1025 77.8 1025 H83.6 Q84.6 1025 85.3 1026 L86.2 1027.2 H95.6 Q96.6 1027.2 96.6 1028.2 V1031 H76.6 Z" fill="url(#gFoldB)" stroke="#c8902c" stroke-width="0.8"/>
<path d="M76.6 1029 V1043 Q76.6 1044.2 77.8 1044.2 H97 Q98.2 1044.2 98.2 1043 V1031 Q98.2 1029.9 97 1029.9 H86.4 L84.6 1031.6 H78.4 V1043" fill="none"/>
<path d="M78.4 1032 Q78.4 1031.6 78.8 1031.6 H84.4 L86.2 1029.9 H97 Q98.2 1029.9 98.2 1031 V1043 Q98.2 1044.2 97 1044.2 H77.8 Q76.6 1044.2 76.6 1043 V1029 H78.4 Z" fill="url(#gFold)" stroke="#c8902c" stroke-width="0.8"/>
<path d="M79.2 1032.6 H84.8 L86.6 1030.9 H96.8" fill="none" stroke="#fffbe0" stroke-width="1"/>
<rect x="77.2" y="1043.2" width="20.4" height="1" fill="#a86410" opacity=".7"/>
<path d="M85.2 1034.4 C85.4 1032.6 87.4 1032 88.8 1033 C91 1034.6 91.6 1036 91.4 1037.8 L93.8 1037.6 L89.6 1042.8 L85.2 1038.2 L87.6 1038 C87.8 1036.4 87 1035 85.2 1034.4 Z" fill="#78e000" stroke="#189000" stroke-width="0.9" stroke-linejoin="round"/>
</svg>
<div class="combo" style="left:114.6px;top:1020.4px;width:273px;height:32px"></div><svg class="i" style="left:363px;top:1030px" width="16" height="12" viewBox="363 1030 16 12" ><path d="M365.40000000000003 1033.3000000000002 H377.40000000000003 L371.40000000000003 1039.9 Z" fill="#8c8c8c"/></svg>
<svg class="i" style="left:405px;top:1024px" width="22" height="21" viewBox="405 1024 22 21" >
<path d="M406.2 1026.4 Q406.2 1025 407.6 1025 H423 L425.2 1027 V1042.4 Q425.2 1043.8 423.8 1043.8 H407.6 Q406.2 1043.8 406.2 1042.4 Z" fill="url(#gFlop)"/>
<rect x="408.6" y="1032" width="14" height="1.2" fill="#a0a0f0" opacity=".8"/>
<rect x="410.8" y="1024.9" width="9.6" height="6" fill="#f2f2f0"/>
<path d="M411.4 1025.6 H417 V1030.2 Z" fill="#bcbcb8"/>
<rect x="417.2" y="1026.4" width="1.7" height="3.2" fill="#3030a0"/>
<rect x="409.2" y="1034.2" width="12.8" height="9.3" fill="#f4f4f2"/>
<rect x="409.2" y="1042.6" width="12.8" height="1.2" fill="#c8c8c4"/>
<rect x="407" y="1041" width="1.2" height="1.6" fill="#d0d0ff"/><rect x="423.2" y="1041" width="1.2" height="1.6" fill="#d0d0ff"/>
</svg>
<svg class="i" style="left:451px;top:1024px" width="21" height="21" viewBox="451 1024 21 21" ><defs><linearGradient id="gGrey2" x1="0" y1="0" x2="0" y2="1"><stop offset="0" stop-color="#c4c4c4"/><stop offset="1" stop-color="#888888"/></linearGradient></defs><path d="M456.2 1025.2 L461.5 1030.4 L466.8 1025.2 L470.6 1029 L465.3 1034.3 L470.6 1039.6 L466.8 1043.4 L461.5 1038.1 L456.2 1043.4 L452.4 1039.6 L457.7 1034.3 L452.4 1029 Z" fill="url(#gGrey2)"/></svg>
<div class="btn" style="left:549px;top:1019.6px;width:142px;height:34.6px"></div>
<svg class="i" style="left:555px;top:1023px" width="23" height="26" viewBox="555 1023 23 26" >
<rect x="556.4" y="1026.4" width="17.6" height="20.8" fill="#e9e9ee"/>
<rect x="556.4" y="1026.4" width="1.1" height="20.8" fill="#7470c0"/>
<rect x="556.4" y="1046.3" width="17.6" height="1" fill="#34327c"/>
<rect x="573.1" y="1026.4" width="0.9" height="20.8" fill="#b0aee0"/>
<path d="M566.6 1025.2 L575.8 1024.8 L575.4 1034 L572.6 1031.2 L567.4 1036.6 L563.8 1033 L569.2 1027.8 Z" fill="url(#gGreen)" stroke="#5c9c00" stroke-width="0.5" stroke-linejoin="round"/>
</svg>
<div class="t" style="left:580.80px;top:1026.80px;height:20px;line-height:20px;font-size:11px;letter-spacing:-0.275px;color:#fff;">Export for NConvert...</div>
<div class="btn" style="left:1060px;top:1019.8px;width:118px;height:34px"></div>
<svg class="i" style="left:1085px;top:1025px" width="26" height="23" viewBox="1085 1025 26 23" >
<rect x="1086.6" y="1026.6" width="17.6" height="15.6" fill="#ffffff"/>
<rect x="1087.6" y="1027.6" width="15.6" height="13.6" fill="#b0acf0"/>
<rect x="1087.6" y="1027.6" width="15.6" height="4" fill="#cfccfa"/>
<rect x="1091.6" y="1030.4" width="17.8" height="15.2" fill="#ffffff"/>
<rect x="1091.6" y="1044.8" width="17.8" height="1.1" fill="#1c1c40"/>
<rect x="1092.7" y="1031.5" width="15.6" height="13" fill="url(#gSun)"/>
<path d="M1092.7 1040 C1096 1037 1099 1036.5 1102 1038 C1104.5 1039.2 1106.4 1038 1108.3 1036.8 V1044.5 H1092.7 Z" fill="#d87808"/>
<path d="M1098 1044.5 C1100 1041 1103 1040 1108.3 1040.6 V1044.5 Z" fill="#b85800"/>
<path d="M1088.4 1034.2 C1090.4 1032.6 1093 1032.8 1094.4 1034.4 L1094.4 1031.4 L1100.2 1037.2 L1094.4 1043 L1094.4 1039.8 C1092.4 1038.6 1090 1039.4 1088.6 1041 C1087.6 1038.4 1087.4 1036.2 1088.4 1034.2 Z" fill="url(#gGreen)" stroke="#4c9000" stroke-width="0.6" stroke-linejoin="round"/>
</svg>
<div class="t" style="left:1113.00px;top:1026.80px;height:20px;line-height:20px;font-size:11px;letter-spacing:-0.419px;color:#fff;"><u>C</u>onvert</div>
<div class="btn" style="left:1189px;top:1023.8px;width:118.2px;height:23.4px"></div>
<div class="t" style="left:1236.00px;top:1025.80px;height:20px;line-height:20px;font-size:11px;letter-spacing:-0.931px;color:#fff;">Close</div>
</body></html>
